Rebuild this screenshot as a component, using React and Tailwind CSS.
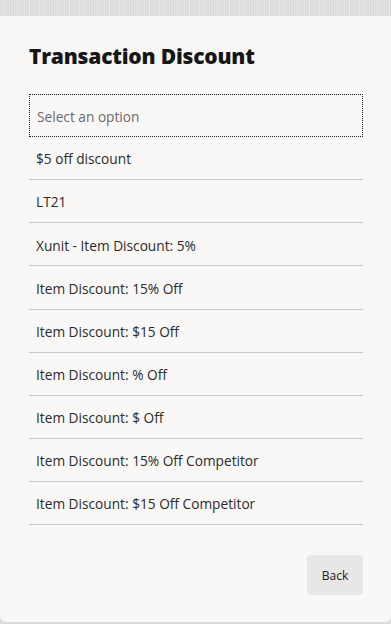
const options = [
  "$5 off discount",
  "LT21",
  "Xunit - Item Discount: 5%",
  "Item Discount: 15% Off",
  "Item Discount: $15 Off",
  "Item Discount: % Off",
  "Item Discount: $ Off",
  "Item Discount: 15% Off Competitor",
  "Item Discount: $15 Off Competitor",
];

export default function App() {
  return (
    <div className="h-[624px] w-[391px] overflow-hidden bg-[#dcdbdb] font-['Open_Sans',sans-serif]">
      <div className="h-4 bg-[repeating-linear-gradient(90deg,#d6d5d5_0px,#e6e5e5_2px,#d9d8d8_3px,#ebeaea_5px)]" />
      <div className="flex h-[606px] flex-col rounded-b-md bg-[#f9f8f7] pl-[29px] pr-[28px] pt-[26px]">
        <h1 className="text-[21px] font-extrabold leading-[28px] tracking-[-0.2px] text-[#161616]">
          Transaction Discount
        </h1>
        <div className="mt-[24px] flex h-[43px] items-center border border-dotted border-[#222] px-[7px] pt-[3px] text-[13.7px] text-[#6b6b6b]">
          Select an option
        </div>
        <ul className="text-[13.7px] text-[#2b2b2b]">
          {options.map((o) => (
            <li key={o} className="flex h-[43.125px] items-center border-b border-[#c9c9c9] px-[7px] pt-[3px]">
              {o}
            </li>
          ))}
        </ul>
        <div className="mt-[30px] flex justify-end">
          <button className="h-[40px] w-[56px] rounded bg-[#e8e6e6] pt-[2px] text-[12px] text-[#222]">
            Back
          </button>
        </div>
      </div>
    </div>
  );
}
